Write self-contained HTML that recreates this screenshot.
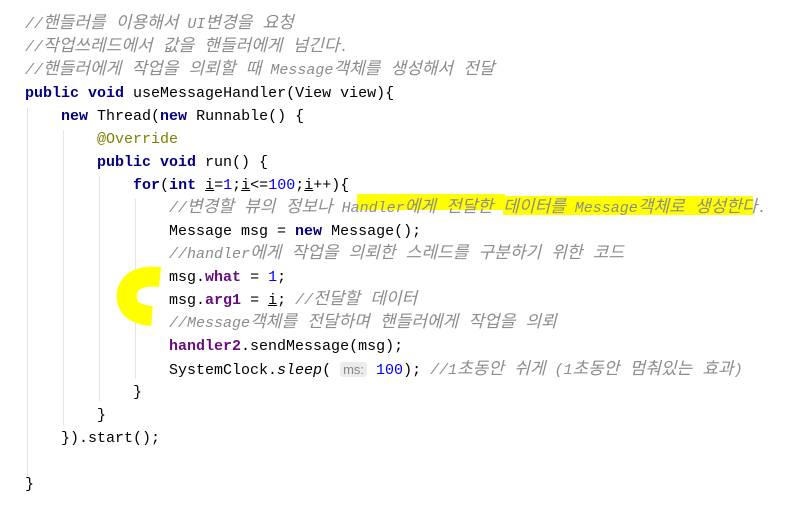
<!DOCTYPE html><html><head><style>
body{margin:0;background:#fff;width:804px;height:509px;overflow:hidden;position:relative}
.c{position:absolute;left:7px;top:13px;font-family:"Liberation Mono","Noto Sans CJK KR",monospace;font-size:15px;line-height:23px;color:#000}
.l{height:23px;position:relative;z-index:2;white-space:pre}
.cm{color:#8c8c8c;font-style:italic}
.cm b{font-weight:normal;font-size:17px;line-height:10px}
.k{color:#000080;font-weight:bold}
.n{color:#0000ff}
.f{color:#660e7a;font-weight:bold}
.a{color:#808000}
.h{background:#ececec;color:#888;font-family:"Liberation Sans",sans-serif;font-size:13px;border-radius:3px;padding:0 3px;font-style:normal}
.g{position:absolute;width:1px;background:#e4e4e4;z-index:1}
.y{position:absolute;background:#ffff00;z-index:1}
</style></head><body>
<div class="g" style="left:27px;top:108px;height:370px"></div>
<div class="g" style="left:63px;top:130px;height:295px"></div>
<div class="g" style="left:99px;top:176px;height:225px"></div>
<div class="g" style="left:135px;top:199px;height:180px"></div>
<div class="y" style="left:357px;top:194px;width:148px;height:16px"></div>
<div class="y" style="left:503px;top:196px;width:250px;height:19px"></div>
<svg style="position:absolute;left:110px;top:262px;z-index:1" width="55" height="70"><path d="M50 15 Q22 12 17 30 Q14 52 42 54" stroke="#ffff00" stroke-width="20" fill="none"/></svg>
<div class="c"><div class="l"><span class="cm">  //<b>핸들러를 이용해서</b> UI<b>변경을 요청</b></span></div><div class="l"><span class="cm">  //<b>작업쓰레드에서 값을 핸들러에게 넘긴다</b>.</span></div><div class="l"><span class="cm">  //<b>핸들러에게 작업을 의뢰할 때</b> Message<b>객체를 생성해서 전달</b></span></div><div class="l">  <span class="k">public void</span> useMessageHandler(View view){</div><div class="l">      <span class="k">new</span> Thread(<span class="k">new</span> Runnable() {</div><div class="l">          <span class="a">@Override</span></div><div class="l">          <span class="k">public void</span> run() {</div><div class="l">              <span class="k">for</span>(<span class="k">int</span> <u>i</u>=<span class="n">1</span>;<u>i</u>&lt;=<span class="n">100</span>;<u>i</u>++){</div><div class="l"><span class="cm">                  //<b>변경할 뷰의 정보나</b> Handler<b>에게 전달한 데이터를</b> Message<b>객체로 생성한다</b>.</span></div><div class="l">                  Message msg = <span class="k">new</span> Message();</div><div class="l"><span class="cm">                  //handler<b>에게 작업을 의뢰한 스레드를 구분하기 위한 코드</b></span></div><div class="l">                  msg.<span class="f">what</span> = <span class="n">1</span>;</div><div class="l">                  msg.<span class="f">arg1</span> = <u>i</u>; <span class="cm">//<b>전달할 데이터</b></span></div><div class="l"><span class="cm">                  //Message<b>객체를 전달하며 핸들러에게 작업을 의뢰</b></span></div><div class="l">                  <span class="f">handler2</span>.sendMessage(msg);</div><div class="l">                  SystemClock.<i>sleep</i>( <span class="h">ms:</span> <span class="n">100</span>); <span class="cm">//1<b>초동안 쉬게</b> (1<b>초동안 멈춰있는 효과</b>)</span></div><div class="l">              }</div><div class="l">          }</div><div class="l">      }).start();</div><div class="l"> </div><div class="l">  }</div></div>
</body></html>
